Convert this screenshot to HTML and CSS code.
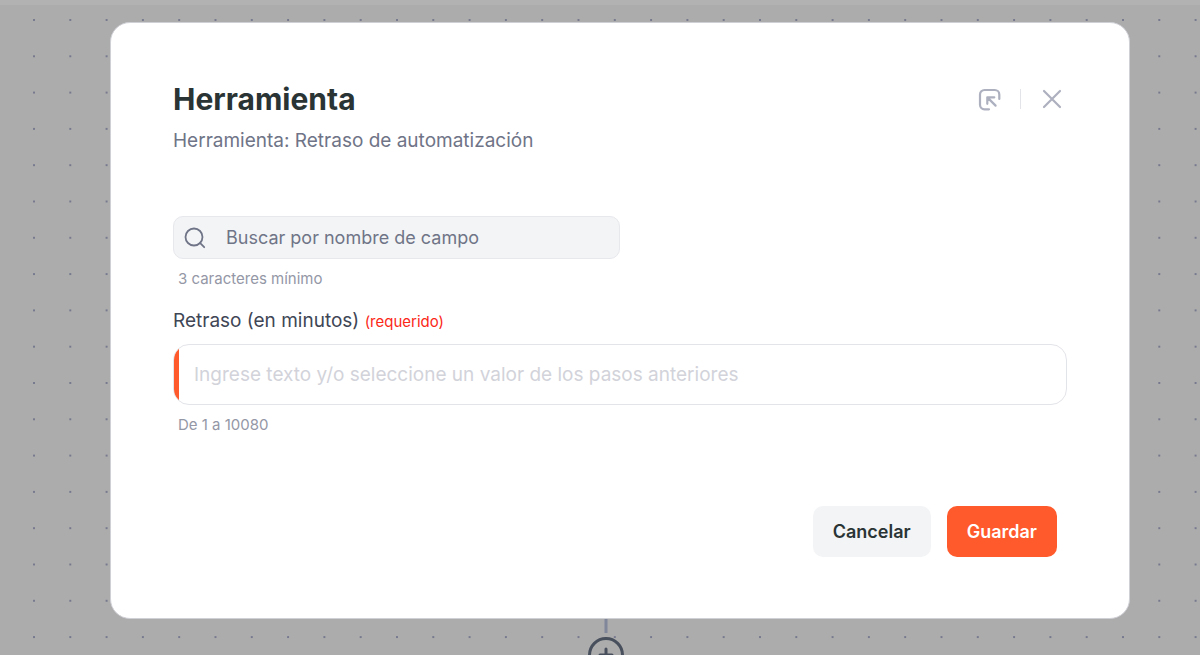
FILE: index.html
```
<!DOCTYPE html>
<html lang="es">
<head>
<meta charset="utf-8">
<meta name="viewport" content="width=device-width, initial-scale=1">
<title>Herramienta</title>
<link rel="stylesheet" href="styles.css">
</head>
<body>
<!-- Flow canvas behind the dialog -->
<svg class="canvas" aria-hidden="true">
    <defs>
        <pattern id="dots" x="33" y="19" width="36.3" height="36.3" patternUnits="userSpaceOnUse">
            <circle cx="1" cy="1" r="0.9" fill="#5d6180"/>
        </pattern>
    </defs>
    <rect width="100%" height="100%" fill="url(#dots)"/>
</svg>

<div class="page">
    <div class="modal" role="dialog" aria-labelledby="modal-title">
        <div class="modal-header">
            <div>
                <h1 id="modal-title">Herramienta</h1>
                <p class="subtitle">Herramienta: Retraso de automatización</p>
            </div>
            <div class="header-actions">
                <button type="button" class="icon-button" aria-label="Abrir">
                    <svg width="24" height="24" viewBox="0 0 24 24" fill="none" stroke="#adb0bf" stroke-width="2.2" stroke-linecap="round" stroke-linejoin="round">
                        <path d="M12 22.300H7.500a4.500 4.500 0 0 1-4.500-4.500V7.500a4.500 4.500 0 0 1 4.500-4.500h10.300a4.500 4.500 0 0 1 4.500 4.500V12"/>
                        <path d="M10.300 16.800V10.300H17.300M10.600 10.600l8 8"/>
                    </svg>
                </button>
                <span class="divider"></span>
                <button type="button" class="icon-button" aria-label="Cerrar">
                    <svg width="24" height="24" viewBox="0 0 24 24" fill="none" stroke="#adb0bf" stroke-width="2.2" stroke-linecap="round">
                        <path d="M4 4l16 16M20 4L4 20"/>
                    </svg>
                </button>
            </div>
        </div>

        <form class="modal-body">
            <div class="search">
                <svg width="22" height="22" viewBox="0 0 22 22" fill="none" stroke="#6f7487" stroke-width="1.800" stroke-linecap="round">
                    <circle cx="10" cy="10" r="8.500"/>
                    <path d="M16.200 16.200l4 4"/>
                </svg>
                <input type="text" aria-label="Buscar por nombre de campo" placeholder="Buscar por nombre de campo">
            </div>
            <p class="hint">3 caracteres mínimo</p>

            <label class="field-label" for="delay">Retraso (en minutos) <span class="required">(requerido)</span></label>
            <div class="field">
                <input type="text" id="delay" placeholder="Ingrese texto y/o seleccione un valor de los pasos anteriores">
            </div>
            <p class="hint">De 1 a 10080</p>

            <div class="modal-footer">
                <button type="button" class="btn">Cancelar</button>
                <button type="button" class="btn btn-primary">Guardar</button>
            </div>
        </form>
    </div>

    <!-- Connector and "add step" node -->
    <svg class="add-step" width="40" height="60" viewBox="0 0 40 60" fill="none" stroke="#484f5d" stroke-linecap="round">
        <path d="M20 0V14" stroke="#80879a" stroke-width="3" stroke-linecap="butt"/>
        <circle cx="20" cy="36" r="16.500" stroke-width="3"/>
        <path d="M20 30v12M14 36h12" stroke-width="3"/>
    </svg>
</div>
</body>
</html>
```
FILE: styles.css
```
* { margin: 0; padding: 0; box-sizing: border-box; }

body {
    background: #acacac;
    border-top: 5px solid #b2b2b2;
    font-family: Inter, "Liberation Sans", sans-serif;
    height: 100vh;
    overflow: hidden;
}

button, input {
    font-family: inherit;
    border: 0;
    background: none;
}

.canvas {
    position: absolute;
    top: 0;
    left: 0;
    width: 100%;
    height: 100%;
}

.page {
    position: relative;
    display: flex;
    flex-direction: column;
    align-items: center;
    padding: 17px 70px 0 110px;
}

/* Dialog */
.modal {
    width: 100%;
    padding: 56px 62px 61px;
    background: #fff;
    border: 1px solid #cfd0d6;
    border-radius: 20px;
}

.modal-header {
    display: flex;
    justify-content: space-between;
    align-items: flex-start;
}

h1 {
    font-size: 30px;
    line-height: 40px;
    font-weight: 700;
    color: #2a3435;
}

.subtitle {
    margin-top: 8px;
    font-size: 19px;
    line-height: 28px;
    color: #6f7487;
}

.header-actions {
    display: flex;
    align-items: center;
    gap: 19px;
    height: 40px;
    padding-right: 3px;
}

.icon-button {
    display: flex;
    cursor: pointer;
}

.divider {
    width: 1px;
    height: 20px;
    background: #e3e4e9;
}

/* Fields */
.modal-body {
    margin-top: 61px;
}

.search {
    display: flex;
    align-items: center;
    gap: 20px;
    width: 50%;
    height: 43px;
    padding: 0 10px;
    background: #f3f4f6;
    border: 1px solid #e7e8ec;
    border-radius: 10px;
}

.search input {
    flex: 1;
    font-size: 18px;
}

.search input::placeholder {
    color: #6f7487;
}

.hint {
    margin-top: 10px;
    padding-left: 5px;
    font-size: 15px;
    line-height: 20px;
    color: #9497a6;
}

.field-label {
    display: block;
    margin-top: 18px;
    font-size: 19px;
    line-height: 28px;
    color: #404655;
}

.required {
    font-size: 15px;
    color: #fb2818;
}

.field {
    display: flex;
    height: 61px;
    margin-top: 8px;
    border: 1px solid #e3e4e9;
    border-radius: 16px;
    overflow: hidden;
}

.field::before {
    content: "";
    width: 5px;
    background: #ff5a2c;
}

.field input {
    flex: 1;
    padding: 0 15px;
    font-size: 19px;
}

.field input::placeholder {
    color: #d2d3da;
}

/* Footer */
.modal-footer {
    display: flex;
    justify-content: flex-end;
    gap: 16px;
    margin-top: 71px;
    padding-right: 10px;
}

.btn {
    height: 51px;
    padding: 0 20px;
    border-radius: 10px;
    background: #f3f4f6;
    font-size: 18px;
    font-weight: 600;
    color: #2a3435;
    cursor: pointer;
}

.btn-primary {
    background: #ff5a2c;
    color: #fff;
}

.add-step {
    margin-right: 28px;
}
```
